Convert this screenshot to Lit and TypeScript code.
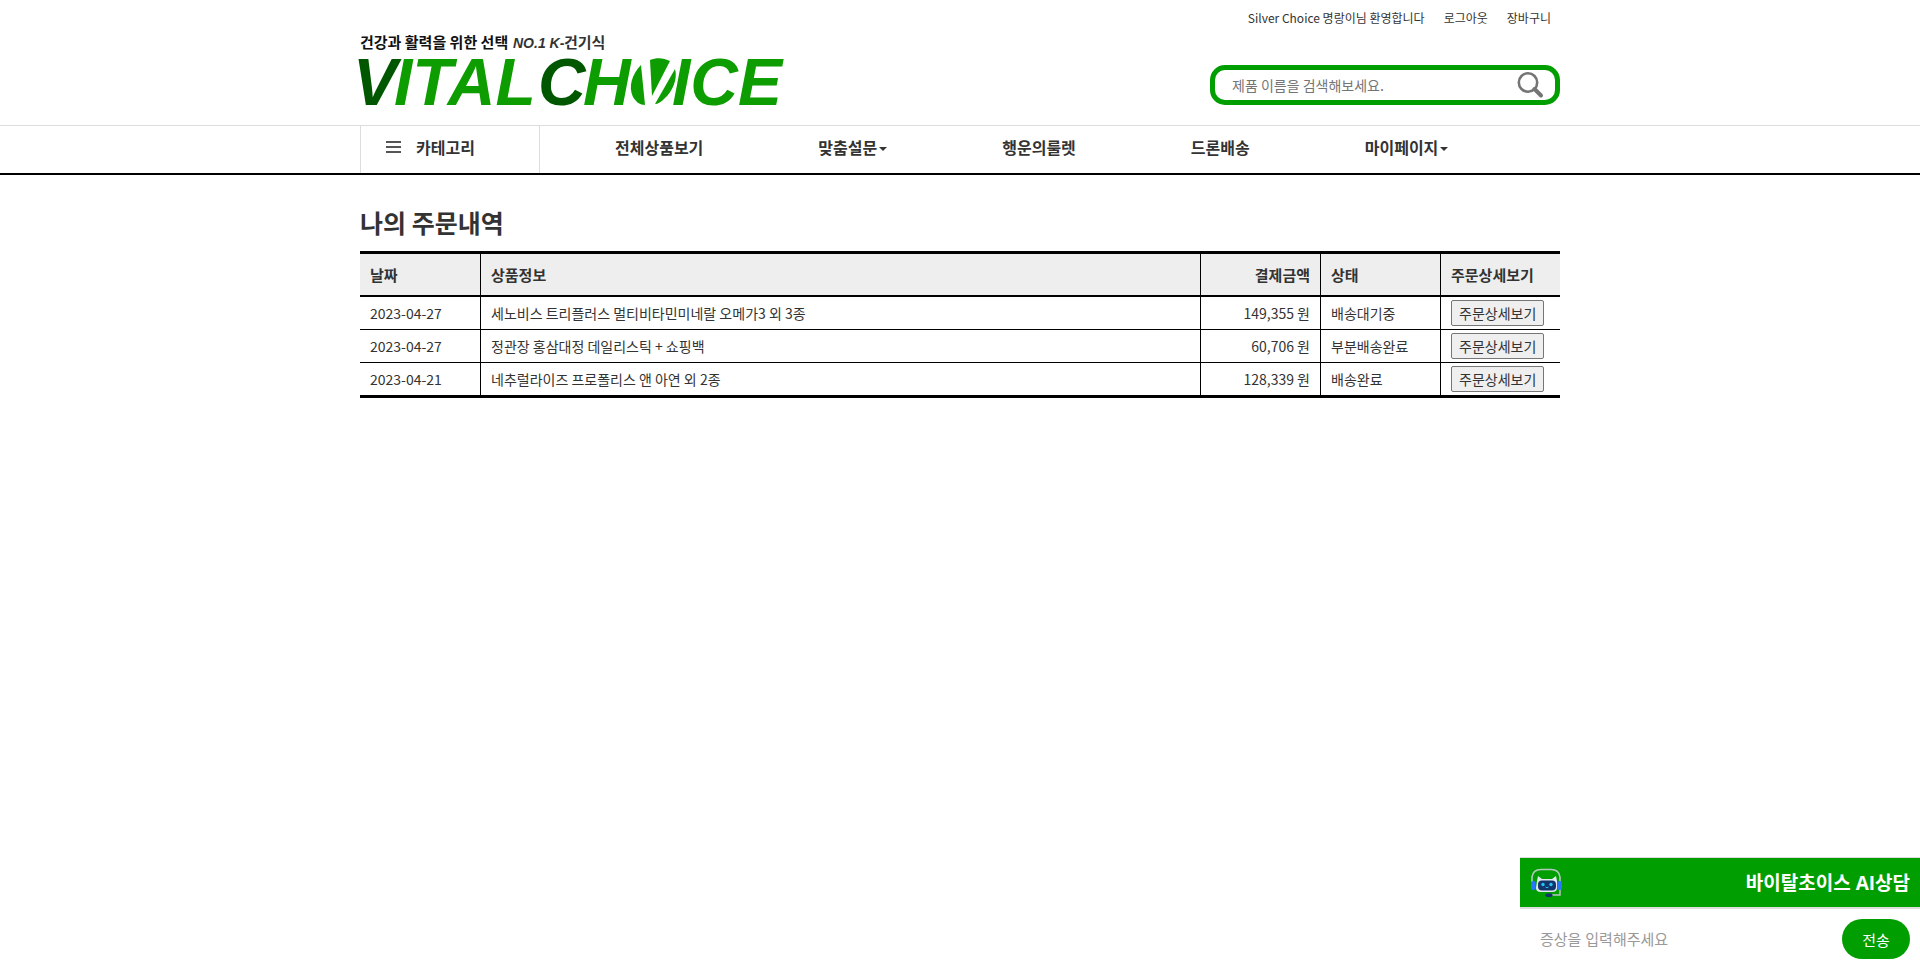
import { LitElement, html, css, nothing } from "lit";
import { customElement, state } from "lit/decorators.js";

interface Order {
  date: string;
  product: string;
  price: number;
  status: string;
}

interface MenuItem {
  label: string;
  dropdown?: boolean;
}

@customElement("site-logo")
class SiteLogo extends LitElement {
  static styles = css`
    :host { display: block; }
    .logo { display: block; width: 440px; height: 88px; margin-left: -8px; }
    .tag { font: 700 15px "Noto Sans CJK KR", sans-serif; fill: #111; }
    .tag-soft { fill: #333; }
    .tag-latin { font: italic 700 14px "Liberation Sans", sans-serif; fill: #333; }
    .word { font: italic 700 66px "Liberation Sans", sans-serif; fill: #0d9d00; }
    .deep { fill: #005700; }
    .leaf { fill: #0d9d00; }
  `;

  render() {
    return html`
      <svg class="logo" viewBox="-8 0 440 88" role="img" aria-label="VITALCHOICE">
        <text class="tag" x="0" y="16">건강과 활력을 위한 선택</text>
        <text class="tag-latin" x="153" y="16">NO.1 K-</text>
        <text class="tag tag-soft" x="204" y="16">건기식</text>
        <text class="word" y="73"><tspan class="deep" x="-7">V</tspan><tspan x="34">ITAL</tspan><tspan class="deep" x="178">C</tspan><tspan x="223">H</tspan><tspan x="312">ICE</tspan></text>
        <path class="leaf" d="M281 33 C272 42 268 55 273 65 C276 70 280 73 285 73 Z" />
        <path class="leaf" d="M290 28 C297 25 304 26 310 29 L292 64 Z" />
        <path class="leaf" d="M315 37 C318 47 312 60 305 66 C301 70 298 72 295 72 Z" />
      </svg>
    `;
  }
}

@customElement("site-header")
class SiteHeader extends LitElement {
  static styles = css`
    :host { display: block; }
    a { color: inherit; text-decoration: none; }
    .inner { max-width: 1200px; margin: 0 auto; }
    .top {
      display: flex; justify-content: flex-end; gap: 19px;
      padding: 9px 9px 0; font-size: 12px; line-height: 18px;
    }
    .brand {
      display: flex; justify-content: space-between; align-items: flex-end;
      padding: 5px 0;
    }
    .search {
      display: flex; align-items: center; box-sizing: border-box;
      width: 350px; height: 40px; margin-bottom: 15px; padding: 0 11px 0 17px;
      border: 5px solid #009e00; border-radius: 15px;
    }
    .search-input {
      flex: 1; min-width: 0; padding: 0; border: 0; outline: 0;
      background: none; font: inherit; color: inherit;
    }
    .search-input::placeholder { color: #757575; opacity: 1; }
    .search-button { padding: 0; border: 0; background: none; cursor: pointer; }
    .search-icon { display: block; width: 28px; height: 28px; }
    .nav { border-top: 1px solid #ddd; border-bottom: 2px solid #000; }
    .bar { display: flex; font-size: 16px; font-weight: 700; line-height: 24px; }
    .category {
      display: flex; align-items: center; gap: 15px; box-sizing: border-box;
      width: 180px; height: 47px; padding: 0 0 5px 25px;
      border: 0 solid #ddd; border-width: 0 1px; background: none;
      font: inherit; color: inherit; cursor: pointer;
    }
    .bars { width: 15px; height: 12px; }
    .menu {
      display: flex; gap: 115px; align-items: center;
      margin: 0; padding: 0 0 5px 75px; list-style: none;
    }
    .link { display: flex; align-items: center; gap: 2px; white-space: nowrap; }
    .caret {
      margin-top: 3px;
      border: solid transparent; border-width: 4px 4px 0; border-top-color: currentColor;
    }
  `;

  private menu: MenuItem[] = [
    { label: "전체상품보기" },
    { label: "맞춤설문", dropdown: true },
    { label: "행운의룰렛" },
    { label: "드론배송" },
    { label: "마이페이지", dropdown: true },
  ];

  render() {
    return html`
      <header>
        <div class="inner">
          <div class="top">
            <span>Silver Choice 명랑이님 환영합니다</span>
            <a href="#logout">로그아웃</a>
            <a href="#cart">장바구니</a>
          </div>
          <div class="brand">
            <a href="#home"><site-logo></site-logo></a>
            <form class="search" role="search" @submit=${(e: Event) => e.preventDefault()}>
              <input class="search-input" type="text" aria-label="제품 검색" placeholder="제품 이름을 검색해보세요." />
              <button class="search-button" aria-label="검색">
                <svg class="search-icon" viewBox="0 0 28 28" fill="none" stroke="#757575" aria-hidden="true">
                  <circle cx="12" cy="11.500" r="9.200" stroke-width="2.600" />
                  <path d="M18.500 18 L25 24.500" stroke-width="4" stroke-linecap="round" />
                </svg>
              </button>
            </form>
          </div>
        </div>
        <nav class="nav">
          <div class="inner bar">
            <button class="category">
              <svg class="bars" viewBox="0 0 15 12" aria-hidden="true">
                <path d="M0 1H15M0 6H15M0 11H15" stroke="#555" stroke-width="2" />
              </svg>
              카테고리
            </button>
            <ul class="menu">
              ${this.menu.map(
                (m) => html`<li>
                  <a class="link" href="#menu">${m.label}${m.dropdown ? html`<span class="caret"></span>` : nothing}</a>
                </li>`
              )}
            </ul>
          </div>
        </nav>
      </header>
    `;
  }
}

@customElement("order-table")
class OrderTable extends LitElement {
  static styles = css`
    :host { display: block; }
    .orders {
      width: 100%; table-layout: fixed; border-spacing: 0;
      border: solid #000; border-width: 3px 0; line-height: 20px;
    }
    .narrow { width: 10%; }
    .wide { width: 60%; }
    th {
      height: 41px; padding: 0 10px; text-align: left; font-size: 15px;
      background: #eee; border-bottom: 2px solid #000;
    }
    td { height: 32px; padding: 0 10px; border-bottom: 1px solid #000; }
    tr:last-child td { border-bottom: 0; }
    th + th, td + td { border-left: 1px solid #000; }
    .price { text-align: right; }
    .detail {
      display: block; padding: 2px 7px; border: 1px solid #767676; border-radius: 2px;
      background: #efefef; font: inherit; color: inherit; white-space: nowrap; cursor: pointer;
    }
  `;

  @state() private orders: Order[] = [
    { date: "2023-04-27", product: "세노비스 트리플러스 멀티비타민미네랄 오메가3 외 3종", price: 149355, status: "배송대기중" },
    { date: "2023-04-27", product: "정관장 홍삼대정 데일리스틱 + 쇼핑백", price: 60706, status: "부분배송완료" },
    { date: "2023-04-21", product: "네추럴라이즈 프로폴리스 앤 아연 외 2종", price: 128339, status: "배송완료" },
  ];

  render() {
    return html`
      <table class="orders">
        <colgroup>
          <col class="narrow" /><col class="wide" /><col class="narrow" /><col class="narrow" /><col class="narrow" />
        </colgroup>
        <thead>
          <tr>
            <th>날짜</th>
            <th>상품정보</th>
            <th class="price">결제금액</th>
            <th>상태</th>
            <th>주문상세보기</th>
          </tr>
        </thead>
        <tbody>
          ${this.orders.map(
            (o) => html`<tr>
              <td>${o.date}</td>
              <td>${o.product}</td>
              <td class="price">${o.price.toLocaleString("en-US")} 원</td>
              <td>${o.status}</td>
              <td><button class="detail">주문상세보기</button></td>
            </tr>`
          )}
        </tbody>
      </table>
    `;
  }
}

@customElement("chat-widget")
class ChatWidget extends LitElement {
  static styles = css`
    :host {
      display: block; position: fixed; right: 0; bottom: 0; width: 400px;
      background: #fff; font-family: "Open Sans", "Noto Sans CJK KR", sans-serif;
    }
    .head {
      display: flex; align-items: center; justify-content: space-between;
      height: 49px; padding: 0 10px; background: #009e00; color: #fff;
      border: solid #ddd; border-width: 1px 0 2px;
    }
    .robot { width: 34px; height: 30px; }
    .title { margin: 0; font-size: 19px; line-height: 28px; }
    .form { display: flex; align-items: center; padding: 10px 10px 10px 20px; }
    .text {
      flex: 1; min-width: 0; padding: 0; border: 0; outline: 0;
      font: inherit; font-size: 15px; color: #333;
    }
    .text::placeholder { color: #999; opacity: 1; }
    .send {
      width: 68px; height: 40px; padding: 0; border: 0; border-radius: 20px;
      background: #009e00; color: #fff; font: inherit; font-size: 15px; cursor: pointer;
    }
  `;

  render() {
    return html`
      <section>
        <div class="head">
          <svg class="robot" viewBox="0 0 34 30" aria-hidden="true">
            <path d="M2 14 V9 Q3 1.500 11 1.500 H21 Q29 1.500 30 9 V14" fill="none" stroke="#b4c8c0" stroke-width="1.600" />
            <path d="M30 20 V27 H22" fill="none" stroke="#b4c8c0" stroke-width="1.500" />
            <path d="M7 13 L8 8 L12 11 H22 L26 8 L27 13 V20 Q27 24 22 24 H11 Q6 24 6 20 Z" fill="#e3e8f4" />
            <rect x="8" y="12.500" width="18" height="10" rx="4" fill="#12356b" />
            <circle cx="13" cy="16.500" r="1.700" fill="#25c4ef" />
            <circle cx="21" cy="16.500" r="1.700" fill="#25c4ef" />
            <path d="M15.500 19 Q17 20.500 18.500 19" fill="none" stroke="#25c4ef" />
            <rect x="1" y="13" width="4.500" height="9" rx="2" fill="#2878ff" />
            <rect x="27.500" y="13" width="4.500" height="9" rx="2" fill="#2878ff" />
            <rect x="15.500" y="25.500" width="7" height="3.500" rx="1.700" fill="#12356b" />
          </svg>
          <h2 class="title">바이탈초이스 AI상담</h2>
        </div>
        <form class="form" @submit=${(e: Event) => e.preventDefault()}>
          <input class="text" type="text" aria-label="증상" placeholder="증상을 입력해주세요" />
          <button class="send">전송</button>
        </form>
      </section>
    `;
  }
}

@customElement("app-root")
class AppRoot extends LitElement {
  static styles = css`
    :host {
      display: block; min-height: 100vh; background: #fff; color: #333;
      font-family: "Noto Sans CJK KR", sans-serif; font-size: 14px;
    }
    .content { max-width: 1200px; margin: 0 auto; padding: 29px 0; }
    .heading { margin: 0 0 11px; font-size: 25px; line-height: 36px; }
  `;

  render() {
    return html`
      <site-header></site-header>
      <main class="content">
        <h1 class="heading">나의 주문내역</h1>
        <order-table></order-table>
      </main>
      <chat-widget></chat-widget>
    `;
  }
}
